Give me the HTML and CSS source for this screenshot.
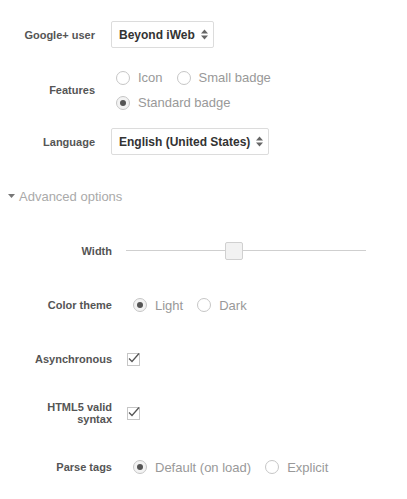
FILE: index.html
```html
<!DOCTYPE html>
<html>
<head>
<meta charset="utf-8">
<link rel="stylesheet" href="styles.css">
</head>
<body>
<div class="page">
  <div class="basic">
    <div class="row row-user">
      <div class="label">Google+ user</div>
      <div class="select">
        <span>Beyond iWeb</span>
        <svg class="arrows" width="7" height="11" viewBox="0 0 7 11"><path d="M3.5 0.5 L7 4.5 H0 Z M3.5 10.5 L7 6.5 H0 Z" fill="#666"/></svg>
      </div>
    </div>
    <div class="row row-features">
      <div class="label">Features</div>
      <div class="options-stack">
        <div class="line">
          <span class="opt"><span class="radio"></span>Icon</span>
          <span class="opt"><span class="radio"></span>Small badge</span>
        </div>
        <div class="line">
          <span class="opt"><span class="radio checked"></span>Standard badge</span>
        </div>
      </div>
    </div>
    <div class="row row-lang">
      <div class="label">Language</div>
      <div class="select">
        <span>English (United States)</span>
        <svg class="arrows" width="7" height="11" viewBox="0 0 7 11"><path d="M3.5 0.5 L7 4.5 H0 Z M3.5 10.5 L7 6.5 H0 Z" fill="#666"/></svg>
      </div>
    </div>
  </div>

  <div class="advanced-toggle">
    <svg class="tri" width="7" height="4" viewBox="0 0 7 4"><path d="M0 0 H7 L3.5 4 Z" fill="#777"/></svg>
    <span>Advanced options</span>
  </div>

  <div class="advanced">
    <div class="arow">
      <div class="alabel">Width</div>
      <div class="slider">
        <div class="track"></div>
        <div class="thumb"></div>
      </div>
    </div>
    <div class="arow">
      <div class="alabel">Color theme</div>
      <div class="aopts">
        <span class="opt"><span class="radio checked"></span>Light</span>
        <span class="opt"><span class="radio"></span>Dark</span>
      </div>
    </div>
    <div class="arow">
      <div class="alabel">Asynchronous</div>
      <div class="checkbox"><svg width="13" height="12" viewBox="0 0 13 12"><path d="M2 6.5 L5 9.5 L12 1.5" fill="none" stroke="#555" stroke-width="1.3"/></svg></div>
    </div>
    <div class="arow">
      <div class="alabel two">HTML5 valid<br>syntax</div>
      <div class="checkbox"><svg width="13" height="12" viewBox="0 0 13 12"><path d="M2 6.5 L5 9.5 L12 1.5" fill="none" stroke="#555" stroke-width="1.3"/></svg></div>
    </div>
    <div class="arow">
      <div class="alabel">Parse tags</div>
      <div class="aopts">
        <span class="opt"><span class="radio checked"></span>Default (on load)</span>
        <span class="opt"><span class="radio"></span>Explicit</span>
      </div>
    </div>
  </div>
</div>
</body>
</html>
```

FILE: styles.css
```css
html, body {
  margin: 0;
  padding: 0;
  background: #fff;
}
body {
  font-family: "Liberation Sans", Arial, sans-serif;
  width: 407px;
  height: 499px;
  overflow: hidden;
}
.page {
  padding-top: 21px;
}
.row {
  display: flex;
  align-items: center;
}
.label {
  width: 95px;
  margin-right: 16px;
  text-align: right;
  font-size: 11px;
  font-weight: bold;
  color: #555;
  flex: none;
}
.select {
  height: 25px;
  border: 1px solid #dcdcdc;
  border-radius: 2px;
  display: flex;
  align-items: center;
  padding: 0 5px 0 7px;
  font-size: 12px;
  font-weight: bold;
  color: #333;
}
.select .arrows {
  margin-left: 6px;
}
.row-features {
  margin-top: 17px;
}
.options-stack .line {
  height: 25px;
  display: flex;
  align-items: center;
}
.opt {
  display: inline-flex;
  align-items: center;
  font-size: 13px;
  color: #999;
  margin-left: 5px;
  margin-right: 9px;
}
.radio {
  width: 12px;
  height: 12px;
  border: 1px solid #c6c6c6;
  border-radius: 50%;
  margin-right: 8px;
  position: relative;
  flex: none;
  background: #fff;
}
.radio.checked {
  background: #f3f3f3;
}
.radio.checked::after {
  content: "";
  position: absolute;
  left: 3px;
  top: 3px;
  width: 6px;
  height: 6px;
  border-radius: 50%;
  background: #555;
}
.row-lang {
  margin-top: 13px;
}
.advanced-toggle {
  margin-top: 31px;
  height: 20px;
  display: flex;
  align-items: center;
  font-size: 13px;
  color: #aaa;
  padding-left: 8px;
}
.advanced-toggle .tri {
  margin-right: 4px;
}
.advanced {
  margin-top: 18px;
}
.arow {
  height: 54px;
  display: flex;
  align-items: center;
}
.alabel {
  width: 112px;
  margin-right: 15px;
  text-align: right;
  font-size: 11px;
  font-weight: bold;
  color: #555;
  flex: none;
  line-height: 12px;
}
.slider {
  position: relative;
  width: 240px;
  height: 18px;
  margin-left: -1px;
}
.track {
  position: absolute;
  left: 0;
  right: 0;
  top: 8px;
  height: 1px;
  background: #cfcfcf;
}
.thumb {
  position: absolute;
  left: 99px;
  top: 0;
  width: 16px;
  height: 16px;
  border: 1px solid #d0d0d0;
  border-radius: 2px;
  background: #f2f2f2;
}
.aopts {
  display: flex;
  align-items: center;
}
.aopts .opt {
  margin-left: 6px;
  margin-right: 14px;
}
.aopts .opt + .opt {
  margin-left: 0;
}
.checkbox {
  width: 11px;
  height: 11px;
  border: 1px solid #c6c6c6;
  position: relative;
}
.checkbox svg {
  position: absolute;
  left: -1px;
  top: -2px;
}
```
